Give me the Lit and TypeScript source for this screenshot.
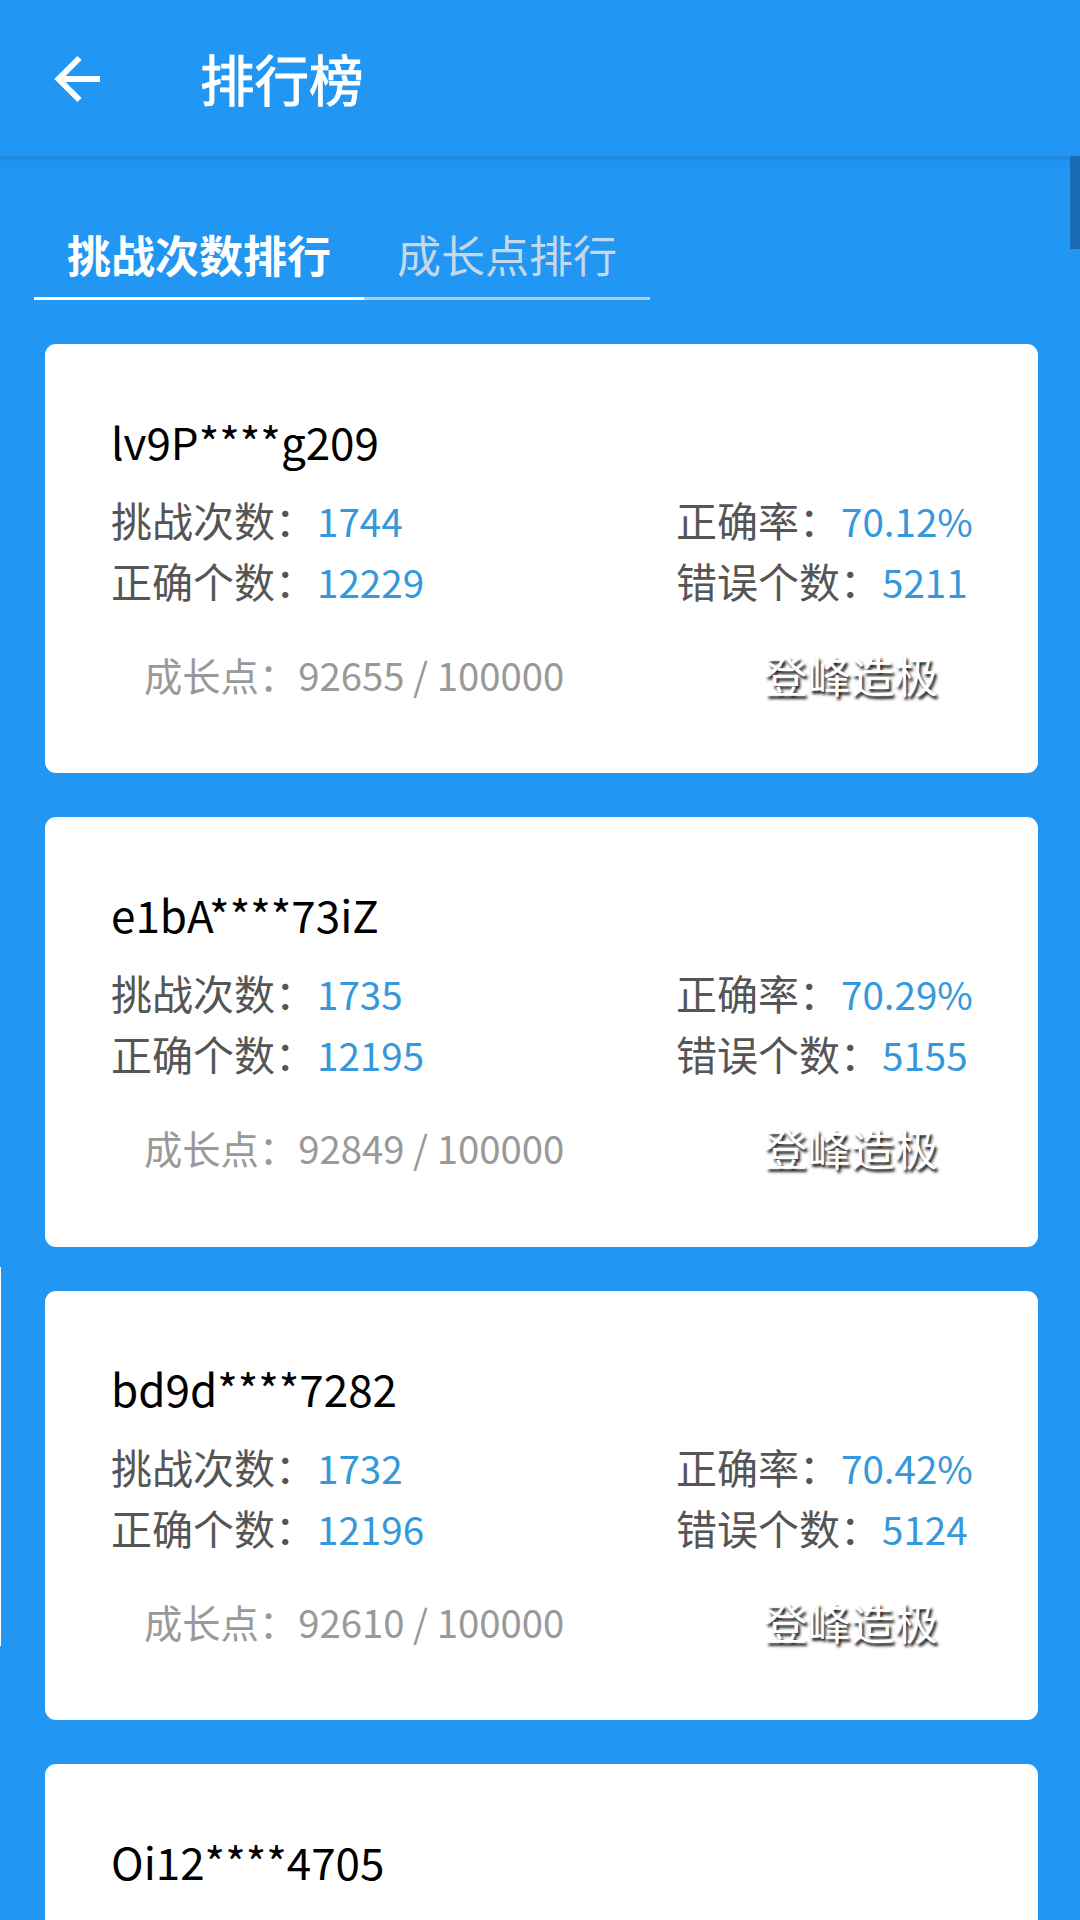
import { LitElement, html, css } from "lit";
import { customElement } from "lit/decorators.js";

interface Entry { name: string; tries: string; rate: string; right: string; wrong: string; points: string; }

const COLON = "\uFF1A";

const ENTRIES: Entry[] = [
  { name: "lv9P****g209", tries: "1744", rate: "70.12%", right: "12229", wrong: "5211", points: "92655 / 100000" },
  { name: "e1bA****73iZ", tries: "1735", rate: "70.29%", right: "12195", wrong: "5155", points: "92849 / 100000" },
  { name: "bd9d****7282", tries: "1732", rate: "70.42%", right: "12196", wrong: "5124", points: "92610 / 100000" },
  { name: "Oi12****4705", tries: "1731", rate: "70.50%", right: "12190", wrong: "5100", points: "92500 / 100000" },
];

@customElement("app-root")
export class AppRoot extends LitElement {
  static styles = css`
    :host {
      display: block;
      position: relative;
      width: 1080px;
      height: 1920px;
      overflow: hidden;
      background: #2196f3;
      font-family: "Noto Sans CJK SC", "Noto Sans", sans-serif;
    }
    .bar {
      height: 156px;
      background: #2196f3;
      box-shadow: 0 4px 0 #1f8ae0, 0 8px 6px rgba(25, 118, 210, 0.08);
      display: flex;
      align-items: center;
      padding-left: 54px;
      position: relative;
      z-index: 1;
    }
    .back { width: 48px; height: 48px; display: block; flex: none; margin-top: 2px; }
    .title {
      margin-left: 98px;
      font-size: 54.5px;
      color: #fff;
      -webkit-text-stroke: 1px #fff;
      line-height: 60px;
    }
    .tabs {
      display: flex;
      margin: 66px 0 0 34px;
      width: 616px;
      height: 78px;
    }
    .tab {
      box-sizing: border-box;
      height: 78px;
      line-height: 64px;
      font-size: 44px;
      border-bottom: 3px solid #aed0f0;
      color: #c4d8ea;
      text-align: center;
    }
    .tab.on {
      width: 330px;
      color: #fff;
      font-weight: 700;
      border-bottom-color: #fff;
    }
    .tab.off { width: 286px; }
    .list {
      display: flex;
      flex-direction: column;
      gap: 44px;
      margin: 44px 0 0 45px;
      width: 993px;
    }
    .card {
      box-sizing: border-box;
      height: 429.3px;
      flex: none;
      background: #fff;
      border-radius: 11px;
      padding: 67px 0 0 66px;
    }
    .name { font-size: 44px; line-height: 60px; color: #000; }
    .grid {
      display: grid;
      grid-template-columns: 565px 1fr;
      grid-auto-rows: 61px;
      margin-top: 18px;
      font-size: 41px;
      line-height: 61px;
      color: #555;
      white-space: nowrap;
    }
    .val { color: #3498db; font-size: 38.6px; margin-left: 1px; }
    .foot {
      display: grid;
      grid-template-columns: 565px 1fr;
      margin-top: 34px;
      line-height: 60px;
      white-space: nowrap;
      align-items: center;
    }
    .points { font-size: 38.3px; color: #999; padding-left: 33px; }
    .points span { margin-left: 1px; }
    .peak {
      font-size: 43.5px;
      color: #fff;
      margin-left: 88px;
      text-shadow: 2px 3px 3px #111;
    }
    .scroll {
      position: absolute;
      right: 0;
      top: 156px;
      width: 10px;
      height: 93px;
      background: #1a6ab4;
      z-index: 2;
    }
    .sliver {
      position: absolute;
      left: 0;
      top: 1267px;
      width: 1px;
      height: 379px;
      background: #fff;
    }
  `;

  render() {
    return html`
      <div class="bar">
        <svg class="back" viewBox="0 0 48 48" fill="none" stroke="#fff" stroke-width="6">
          <path d="M46 24H6" />
          <path d="M25.500 3L4.500 24L25.500 45" />
        </svg>
        <div class="title">排行榜</div>
      </div>
      <div class="tabs">
        <div class="tab on">挑战次数排行</div>
        <div class="tab off">成长点排行</div>
      </div>
      <div class="list">
        ${ENTRIES.map(
          (e) => html`
            <div class="card">
              <div class="name">${e.name}</div>
              <div class="grid">
                <div>挑战次数${COLON}<span class="val">${e.tries}</span></div>
                <div>正确率${COLON}<span class="val">${e.rate}</span></div>
                <div>正确个数${COLON}<span class="val">${e.right}</span></div>
                <div>错误个数${COLON}<span class="val">${e.wrong}</span></div>
              </div>
              <div class="foot">
                <div class="points">成长点${COLON}<span>${e.points}</span></div>
                <div class="peak">登峰造极</div>
              </div>
            </div>
          `
        )}
      </div>
      <div class="scroll"></div>
      <div class="sliver"></div>
    `;
  }
}
